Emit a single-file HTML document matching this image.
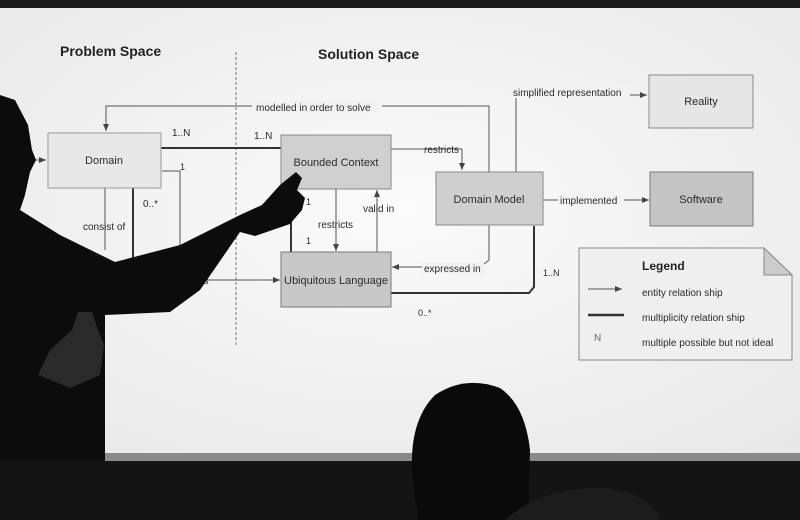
<!DOCTYPE html>
<html><head><style>
html,body{margin:0;padding:0;background:#111;}
svg{display:block}
text{font-family:"Liberation Sans",sans-serif;fill:#2a2a2a;}
</style></head><body>
<svg width="800" height="520" viewBox="0 0 800 520" xmlns="http://www.w3.org/2000/svg">
<defs>
<marker id="a" markerWidth="8" markerHeight="8" refX="7" refY="4" orient="auto"><path d="M0,1 L7,4 L0,7 z" fill="#444"/></marker>
<radialGradient id="g" cx="0.5" cy="0.45" r="0.8"><stop offset="0" stop-color="#fbfbfb"/><stop offset="1" stop-color="#e6e6e6"/></radialGradient>
</defs>
<rect width="800" height="520" fill="#151515"/>
<rect x="0" y="8" width="800" height="448" fill="url(#g)"/>
<rect x="0" y="453" width="800" height="8" fill="#8a8a8a"/>
<text x="60" y="56" font-size="14" font-weight="bold" style="fill:#222">Problem Space</text>
<text x="318" y="59" font-size="14" font-weight="bold" style="fill:#222">Solution Space</text>
<line x1="236" y1="52" x2="236" y2="345" stroke="#777" stroke-dasharray="3,2"/>
<polyline points="489,172 489,106 106,106 106,131" fill="none" stroke="#555" marker-end="url(#a)"/>
<rect x="252" y="100" width="130" height="12" fill="#f2f2f2"/>
<text x="256" y="111" font-size="10">modelled in order to solve</text>
<line x1="161" y1="148" x2="281" y2="148" stroke="#333" stroke-width="2"/>
<text x="172" y="136" font-size="10">1..N</text><text x="254" y="139" font-size="10">1..N</text>
<polyline points="162,171 180,171 180,260 190,260" fill="none" stroke="#555"/>
<text x="180" y="170" font-size="9">1</text>
<line x1="105" y1="188" x2="105" y2="250" stroke="#555"/>
<line x1="133" y1="188" x2="133" y2="260" stroke="#333" stroke-width="2"/>
<text x="83" y="230" font-size="10">consist of</text>
<text x="143" y="207" font-size="10">0..*</text>
<line x1="30" y1="160" x2="46" y2="160" stroke="#555" marker-end="url(#a)"/>
<line x1="190" y1="280" x2="280" y2="280" stroke="#555" marker-end="url(#a)"/>
<text x="198" y="284" font-size="10">es</text>
<line x1="391" y1="149" x2="462" y2="149" stroke="#555"/>
<polyline points="462,149 462,170" fill="none" stroke="#555" marker-end="url(#a)"/>
<text x="424" y="153" font-size="10">restricts</text>
<line x1="336" y1="189" x2="336" y2="251" stroke="#555" marker-end="url(#a)"/>
<text x="318" y="228" font-size="10">restricts</text>
<line x1="377" y1="252" x2="377" y2="190" stroke="#555" marker-end="url(#a)"/>
<text x="363" y="212" font-size="10">valid in</text>
<line x1="291" y1="189" x2="291" y2="252" stroke="#333" stroke-width="2"/>
<text x="306" y="205" font-size="9">1</text><text x="306" y="244" font-size="9">1</text>
<polyline points="489,225 489,260 480,267 392,267" fill="none" stroke="#555" marker-end="url(#a)"/>
<rect x="422" y="262" width="62" height="12" fill="#f2f2f2"/>
<text x="424" y="272" font-size="10">expressed in</text>
<polyline points="534,226 534,287 529,293 391,293" fill="none" stroke="#333" stroke-width="2"/>
<text x="543" y="276" font-size="9">1..N</text>
<text x="418" y="316" font-size="9">0..*</text>
<polyline points="516,172 516,95 647,95" fill="none" stroke="#555" marker-end="url(#a)"/>
<rect x="512" y="86" width="118" height="12" fill="#f2f2f2"/>
<text x="513" y="96" font-size="10">simplified representation</text>
<line x1="543" y1="200" x2="649" y2="200" stroke="#555" marker-end="url(#a)"/>
<rect x="558" y="194" width="66" height="12" fill="#f2f2f2"/>
<text x="560" y="204" font-size="10">implemented</text>
<rect x="48" y="133" width="113" height="55" fill="#e8e8e8" stroke="#999"/>
<text x="104" y="164" font-size="11" text-anchor="middle">Domain</text>
<rect x="281" y="135" width="110" height="54" fill="#d0d0d0" stroke="#888"/>
<text x="336" y="166" font-size="11" text-anchor="middle">Bounded Context</text>
<rect x="436" y="172" width="107" height="53" fill="#cfcfcf" stroke="#888"/>
<text x="489" y="203" font-size="11" text-anchor="middle">Domain Model</text>
<rect x="649" y="75" width="104" height="53" fill="#e6e6e6" stroke="#888"/>
<text x="701" y="105" font-size="11" text-anchor="middle">Reality</text>
<rect x="650" y="172" width="103" height="54" fill="#c4c4c4" stroke="#777"/>
<text x="701" y="203" font-size="11" text-anchor="middle">Software</text>
<rect x="281" y="252" width="110" height="55" fill="#c8c8c8" stroke="#777"/>
<text x="336" y="284" font-size="11" text-anchor="middle">Ubiquitous Language</text>
<path d="M579,248 L764,248 L792,275 L792,360 L579,360 Z" fill="#efefef" stroke="#888"/>
<path d="M764,248 L764,275 L792,275 Z" fill="#ccc" stroke="#888"/>
<text x="642" y="270" font-size="12" font-weight="bold" style="fill:#222">Legend</text>
<line x1="588" y1="289" x2="622" y2="289" stroke="#555" marker-end="url(#a)"/>
<text x="642" y="296" font-size="10">entity relation ship</text>
<line x1="588" y1="315" x2="624" y2="315" stroke="#333" stroke-width="2.5"/>
<text x="642" y="321" font-size="10">multiplicity relation ship</text>
<text x="594" y="341" font-size="10" style="fill:#666">N</text>
<text x="642" y="346" font-size="10">multiple possible but not ideal</text>
<path d="M0,95 L15,100 L28,125 L32,150 L36,160 L30,172 L25,195 L20,210 L60,235 L115,262 L180,245 L240,215 L262,205 L280,185 L296,172 L302,178 L297,190 L305,198 L302,210 L290,224 L255,236 L240,232 L200,290 L170,312 L105,315 L105,520 L0,520 Z" fill="#0c0c0c"/>
<path d="M72,330 L78,312 L92,312 L98,330 L104,345 L100,375 L70,388 L38,375 L50,350 Z" fill="#2a2a2a"/>
<rect x="0" y="461" width="800" height="59" fill="#141414"/>
<path d="M418,520 L412,470 Q410,420 435,395 Q465,375 500,388 Q525,405 530,450 L528,520 Z" fill="#0a0a0a"/>
<path d="M505,520 Q540,488 600,488 Q650,492 660,520 Z" fill="#1c1c1c"/>
<rect x="0" y="0" width="800" height="8" fill="#1a1a1a"/>
</svg>
</body></html>
